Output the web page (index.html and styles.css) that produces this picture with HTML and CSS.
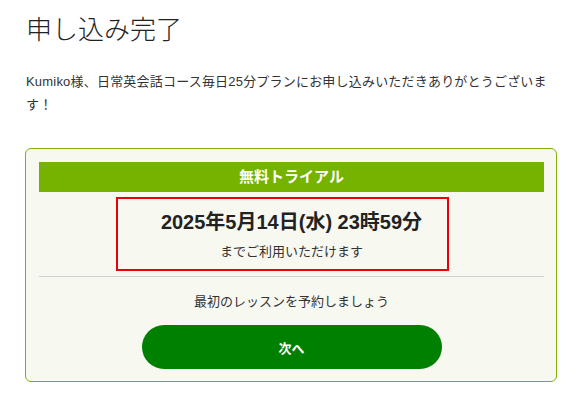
FILE: index.html
```html
<!DOCTYPE html>
<html lang="ja">
<head>
<meta charset="utf-8">
<title>申し込み完了</title>
<link rel="stylesheet" href="styles.css">
</head>
<body>
<div class="page">
  <h1 class="title">申し込み完了</h1>
  <p class="message">Kumiko様、日常英会話コース毎日25分プランにお申し込みいただきありがとうございます！</p>
  <section class="card">
    <div class="card-head">無料トライアル</div>
    <div class="period">
      <div class="period-date">2025年5月14日(水) 23時59分</div>
      <div class="period-note">までご利用いただけます</div>
    </div>
    <hr class="divider">
    <div class="next-text">最初のレッスンを予約しましょう</div>
    <div class="actions"><a class="btn-next" href="#">次へ</a></div>
    <div class="highlight"></div>
  </section>
</div>
</body>
</html>
```

FILE: styles.css
```css
html, body {
  margin: 0;
  padding: 0;
  background: #fff;
}
body {
  font-family: "Liberation Sans", "Noto Sans CJK JP", sans-serif;
  color: #333;
}
.page {
  padding: 0 22px 0 25px;
}
.title {
  margin: 10px 0 0 1px;
  font-size: 26px;
  line-height: 36px;
  font-weight: 300;
  color: #222;
  font-family: "Noto Sans CJK JP", sans-serif;
}
.message {
  margin: 24px 0 0 1px;
  font-size: 13px;
  line-height: 23px;
  letter-spacing: 0.2px;
  color: #333;
}
.card {
  position: relative;
  margin-top: 32px;
  border: 1px solid #7cb305;
  border-radius: 6px;
  background: #f7f8f0;
  padding: 13px 12px 12px 13px;
}
.card-head {
  height: 30px;
  line-height: 30px;
  background: #76b200;
  color: #fff;
  font-weight: bold;
  font-size: 15px;
  text-align: center;
}
.period {
  text-align: center;
  padding-top: 15px;
}
.period-date {
  font-size: 20px;
  line-height: 30px;
  font-weight: bold;
  color: #222;
}
.period-note {
  margin-top: 5px;
  font-size: 13px;
  line-height: 20px;
  color: #333;
}
.divider {
  margin: 14px 0 0 0;
  border: 0;
  border-top: 1px solid #d0d0d0;
  height: 0;
}
.next-text {
  margin-top: 15px;
  font-size: 13px;
  line-height: 20px;
  text-align: center;
  color: #333;
}
.actions {
  margin-top: 13px;
  display: flex;
  justify-content: center;
}
.btn-next {
  display: flex;
  align-items: center;
  justify-content: center;
  width: 300px;
  height: 44px;
  border-radius: 22px;
  background: #008000;
  color: #fff;
  font-weight: bold;
  font-size: 13px;
  text-decoration: none;
}
.highlight {
  position: absolute;
  left: 90px;
  top: 48px;
  width: 329px;
  height: 70px;
  border: 2px solid #e8000b;
}
```
